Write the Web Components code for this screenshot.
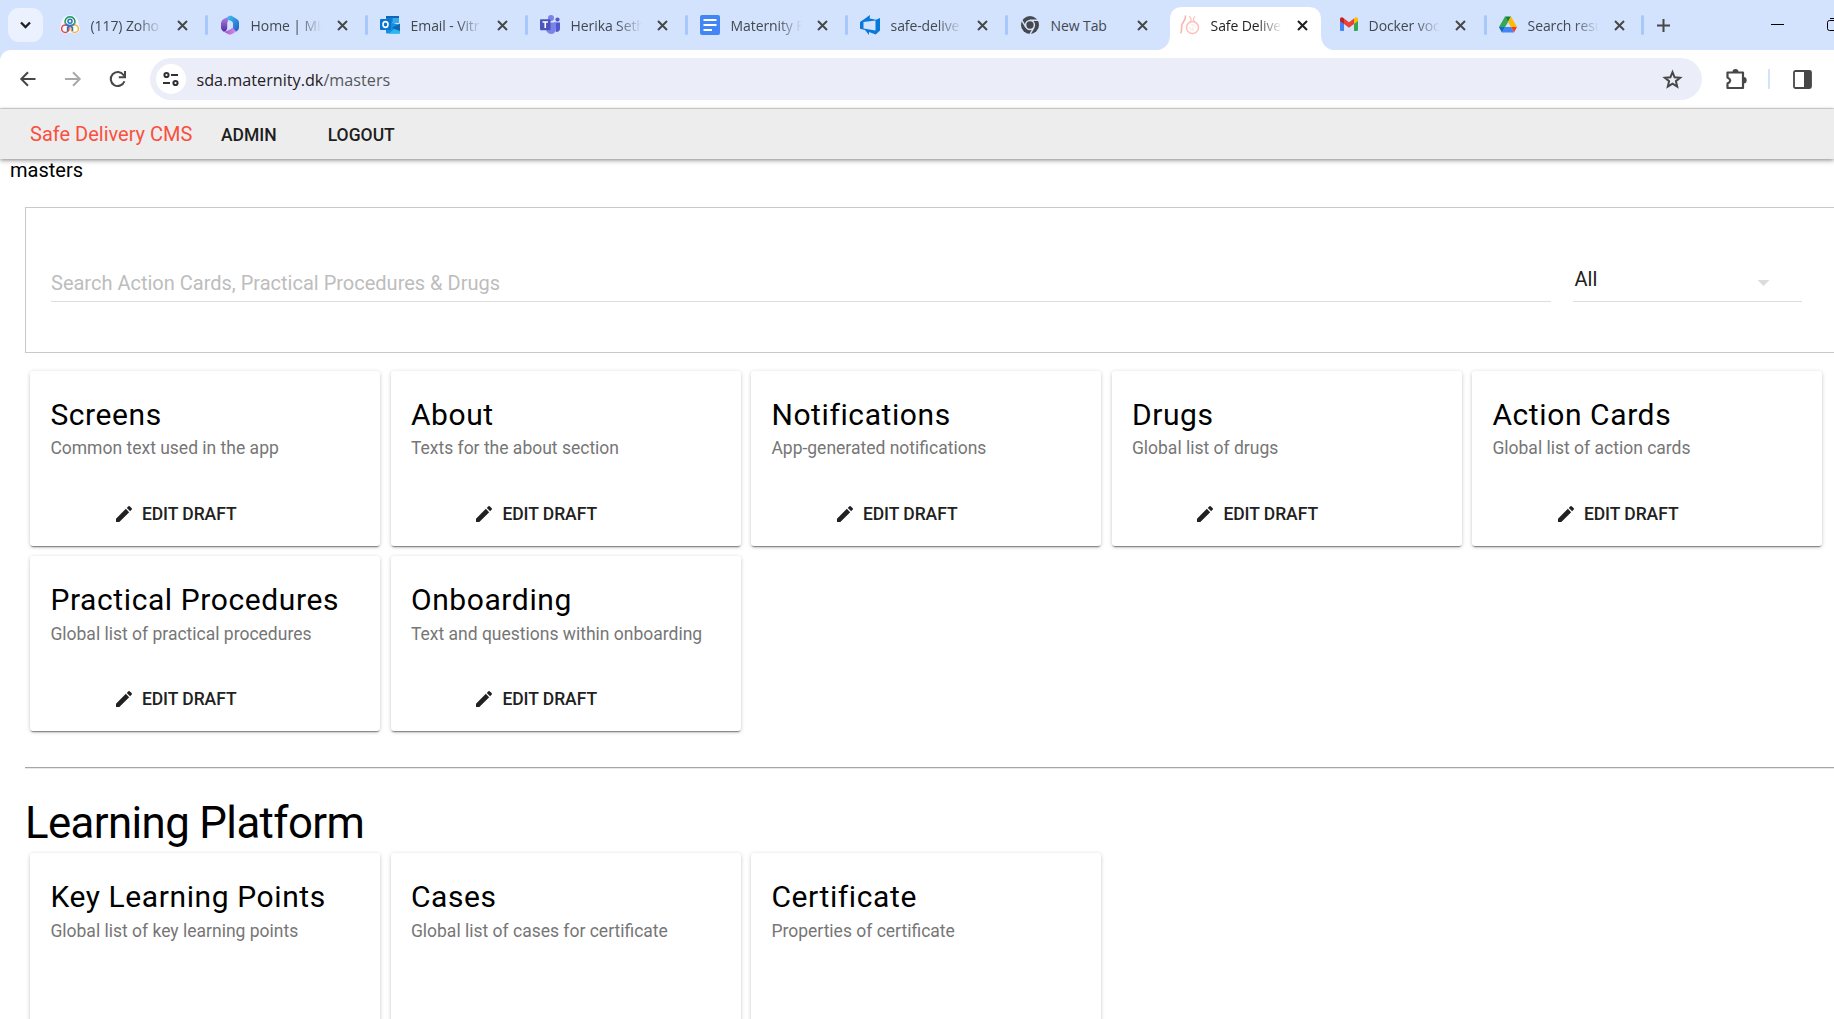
<!DOCTYPE html>
<html lang="en">
<head>
<meta charset="utf-8">
<title>Safe Delivery CMS</title>
<style>
html,body{margin:0;height:100%;overflow:hidden;background:#fff}
body{font-family:Roboto,"Liberation Sans",sans-serif;color:#000}
</style>
</head>
<body>
<cms-window></cms-window>
<script>
const define=(name,css,html)=>customElements.define(name,class extends HTMLElement{
  connectedCallback(){
    if(this.shadowRoot)return;
    const root=this.attachShadow({mode:'open'});
    root.innerHTML='<style>*{box-sizing:border-box}svg{display:block;overflow:visible}'+css+'</style>'+(typeof html==='function'?html(this):html);
  }
});

const icons={
zoho:'<circle cx="10" cy="9" r="9" fill="#f7fafc" opacity=".8"/><circle cx="5.300" cy="13.500" r="5" fill="#fff"/><circle cx="14.700" cy="13.500" r="5" fill="#fff"/><g fill="none" stroke-width="1.500"><path d="M5.300 8.500a5 5 0 1 1 9.400 0" stroke="#159957"/><circle cx="5.300" cy="13.700" r="3.700" stroke="#e3434b"/><circle cx="14.700" cy="13.700" r="3.700" stroke="#f4b63d"/><path d="M5.500 8.400c1 2 3 2 4.500 2s3.500 0 4.500-2M7.500 16v-3.500L10 11l2.500 1.500V16" stroke="#2c75bd"/><circle cx="10" cy="6.300" r="2" stroke="#2c75bd"/></g>',
m365:'<defs><linearGradient id="a" x1="0" y1="0" x2="0" y2="1"><stop stop-color="#b68be9"/><stop offset="1" stop-color="#512aa0"/></linearGradient><linearGradient id="b" x1="0" y1="0" x2="1" y2="1"><stop stop-color="#3fc4f5"/><stop offset="1" stop-color="#2759c5"/></linearGradient><linearGradient id="c"><stop stop-color="#9d55d8"/><stop offset="1" stop-color="#dc90ea"/></linearGradient></defs><path d="M11 .8 4.500 3.600Q1.300 5 1 8v5q.3 2.700 2.800 3.800 3.200-.8 3.400-3.800V8Q7.500 4.500 11 .8z" fill="url(#a)"/><path d="M9 .8h2.500l6 3.600q1.500 1 1.500 3V13q-.3 2.500-2.800 3.500-3-1-3.200-3.500V8Q12.500 6 10 5.500 7.500 5 7 3z" fill="url(#b)"/><path d="M3.500 16.500q3.500-.3 6-1.800l3.500-2.200q.6 3 4 3.800L12 18.900q-2 1-4.200 0z" fill="url(#c)"/>',
outlook:'<path d="M6 1h13v6H6z" fill="#0e66b5"/><path d="M6 3h6.500v5H6z" fill="#137fd2"/><path d="M12.500 3H19v5h-6.500z" fill="#36a9ee"/><path d="M6 8h7l7 2v7.500q0 1-1 1H7q-1 0-1-1z" fill="#1490df"/><path d="M20 9v9q0 .5-1 .5H9z" fill="#28b7ef"/><path d="m12 13 8-4.500V16z" fill="#1265b0"/><rect y="4" width="11" height="11" rx="1" fill="#0875cf"/><ellipse cx="5.500" cy="9.500" rx="2.500" ry="2.900" fill="none" stroke="#fff" stroke-width="1.600"/>',
teams:'<circle cx="11" cy="3" r="3" fill="#7b83eb"/><circle cx="17.500" cy="4.600" r="2.100" fill="#5059c9"/><path d="M14 7.500h6V14q-.4 3-4 3z" fill="#5059c9"/><path d="M6 7.500h10V14q-.5 5-5 5-4.500-.3-5-5z" fill="#7b83eb"/><rect y="4.300" width="10.500" height="11" rx="1" fill="#4b53bc"/><path d="M2.500 7h5.500M5.250 7v6" stroke="#fff" stroke-width="1.600"/>',
docs:'<rect width="20" height="20" rx="2" fill="#4285f4"/><path d="M3.500 5h13M3.500 10h13M3.500 15h8.500" stroke="#fff" stroke-width="2"/>',
devops:'<path fill-rule="evenodd" d="M0 7 5.500 3.300 9.800 0v3.400L16 4.800 20 3v12.500l-4.300 4L9 17v3l-4-5-5-1.200zM3.500 7v6.500l12 2V5.500z" fill="#0879da"/>',
chrome:'<circle cx="10" cy="10" r="9" fill="#46484c"/><circle cx="10" cy="10" r="4.400" fill="#46484c" stroke="#d3e3fd" stroke-width="1.500"/><path d="M9.800 5.300H18M6 12.300 1.800 5.300M13.900 12.300l-4 7.200" stroke="#d3e3fd" stroke-width="1.500"/>',
safe:'<g fill="none" stroke="#f9b5ae" stroke-linecap="round"><circle cx="12.500" cy="12.600" r="6" stroke-width="1.500" opacity=".85"/><path d="M.8 17.700C2.500 15 .8 12.500 2 9.500S6 5 5.500 1" stroke-width="1.600"/><path d="M9.700 1.500q2.500 2.500.8 5M14.800 1.500q-2.300 2.500-.5 5" stroke-width="1.100" opacity=".8"/><path d="M9.500 12q.4 3 3 3.300M11.500 10q3-1.500 4 2M13 12v3" stroke-width=".8" opacity=".5"/></g>',
gmail:'<path d="M0 4v11q0 1 1 1h3V7z" fill="#4285f4"/><path d="M14 7v9h3q1 0 1-1V4z" fill="#34a853"/><path d="M14 3.500V9l4-3V4q-.3-2.400-2.700-1.500z" fill="#fbbc04"/><path d="m4 3.500 5 3.700 5-3.700V9l-5 3.700L4 9z" fill="#ea4335"/><path d="M0 6V4q.3-2.400 2.700-1.500L4 3.500V9z" fill="#c5221f"/>',
drive:'<path d="M6 1.500 0 12l3 5.500L9 7z" fill="#34a853"/><path d="M6 1.500h6L9 7z" fill="#188038"/><path d="m12 1.500 6 10.500h-6L9 7z" fill="#fbbc04"/><path d="M0 12h6l-3 5.500z" fill="#1967d2"/><path d="M6 12h6l3 5.500H3z" fill="#4285f4"/><path d="M12 12h6l-3 5.500z" fill="#ea4335"/>'
};

define('browser-tab',`
:host{display:flex;position:relative;align-items:center;width:160px;height:50px;flex:none;padding-left:12px;font:14px "Open Sans","Noto Sans",sans-serif;letter-spacing:-.1px;color:#43484f}
:host([icon=gmail]){width:159px}:host([icon=drive]){width:157px}
.fav{width:20px;height:20px;flex:none}
.label{width:71px;margin-left:11px;overflow:hidden;white-space:nowrap;line-height:24px;padding-top:1px}
:host([icon=gmail]) .label,:host([icon=drive]) .label{margin-left:9px}
:host([fade]) .label{-webkit-mask-image:linear-gradient(90deg,#000 65%,transparent);mask-image:linear-gradient(90deg,#000 65%,transparent)}
.close{margin-left:15px;width:11px;height:11px}
:host([icon=drive]) .close{margin-left:15px}
.sep{width:3px;height:20px;border-radius:2px;background:#a8c7fa;margin-left:auto}
:host([nosep]) .sep{visibility:hidden}
:host([active]){color:#1f1f1f}
.shape{position:absolute;left:-14px;top:7px;z-index:-1}
`,t=>`${t.hasAttribute('active')?'<svg class="shape" width="182" height="44"><path d="M0 44v-.5Q16 43 16 27V13Q16 0 29 0h125q13 0 13 13v14q0 16 16 16.500v.5z" fill="#fff"/></svg>':''}<svg class="fav" viewBox="0 0 20 20">${icons[t.getAttribute('icon')]}</svg><div class="label"><slot></slot></div><svg class="close" viewBox="0 0 11 11"><path d="m1 1 9 9m0-9-9 9" fill="none" stroke="${t.hasAttribute('active')?'#1f1f1f':'#474747'}" stroke-width="2"/></svg><div class="sep"></div>`);

define('tab-strip',`
:host{display:flex;height:50px;background:#d3e3fd;padding-left:8px;position:relative;z-index:0;overflow:hidden}
.search{width:35px;height:34px;border-radius:11px;background:#ebf1fe;margin:8px 4.600px 0 0;display:grid;place-items:center;flex:none}
.plus{margin:19px 0 0 13px;flex:none}.min{margin:24px 0 0 101px;flex:none}.max{margin:18px 0 0 43px;flex:none}
`,`<div class="search"><svg width="11" height="8"><path d="m1 1.500 4.500 4.500L10 1.500" fill="none" stroke="#1f1f1f" stroke-width="2.300"/></svg></div>
<browser-tab icon="zoho" fade>(117) Zoho</browser-tab><browser-tab icon="m365" fade>Home | Mic</browser-tab><browser-tab icon="outlook" fade>Email - Vitr</browser-tab><browser-tab icon="teams" fade>Herika Seth</browser-tab><browser-tab icon="docs" fade>Maternity F</browser-tab><browser-tab icon="devops" fade>safe-delive</browser-tab><browser-tab icon="chrome" nosep>New Tab</browser-tab><browser-tab icon="safe" active fade nosep>Safe Delive</browser-tab><browser-tab icon="gmail" fade>Docker voc</browser-tab><browser-tab icon="drive" fade>Search resu</browser-tab>
<svg class="plus" width="13" height="13"><path d="M6.500 0v13M0 6.500h13" stroke="#474747" stroke-width="2"/></svg>
<svg class="min" width="13" height="1"><path d="M0 .5h13" stroke="#000"/></svg>
<svg class="max" width="14" height="14"><rect x=".5" y="2.500" width="10" height="10" rx="2" fill="none" stroke="#000"/><path d="M3 .5h10V10" fill="none" stroke="#000"/></svg>`);

define('address-bar',`
:host{display:block;height:59px;background:#d3e3fd}
.bar{display:flex;align-items:center;height:59px;background:#fff;border-radius:11px 0 0 0;border-bottom:1px solid #dcdcdd;padding-left:20px}
svg{flex:none}.fwd{margin-left:29px}.reload{margin-left:29px}
.omni{display:flex;align-items:center;width:1552px;height:42px;border-radius:21px;background:#ebeef8;margin-left:24px;padding:0 20px 0 6px;flex:none}
.site{width:30px;height:30px;border-radius:50%;background:#fff;display:grid;place-items:center;flex:none}
.url{font:16.200px/24px "Open Sans","Noto Sans",sans-serif;color:#1f2023;margin-left:10.500px;padding-top:1px;flex:1;white-space:nowrap}.url span{color:#55585c}
.puzzle{margin-left:24px}.line{width:2px;height:20px;background:#d3e3fd;margin:0 23px 0 21px}
`,`<div class="bar">
<svg width="16" height="16"><path d="M15.500 8H2M8 1.300 1.300 8 8 14.700" fill="none" stroke="#474747" stroke-width="2"/></svg>
<svg class="fwd" width="16" height="16"><path d="M0 8h13.500M8 1.300 14.700 8 8 14.700" fill="none" stroke="#a9a9a9" stroke-width="2"/></svg>
<svg class="reload" width="16" height="16"><path d="M14.400 10.200A7 7 0 1 1 13.500 4L15 5.800" fill="none" stroke="#474747" stroke-width="2"/><path d="M15 0v6.300H8.800" fill="none" stroke="#474747" stroke-width="2"/></svg>
<div class="omni"><div class="site"><svg width="16" height="14"><g fill="none" stroke="#303134" stroke-width="2"><circle cx="3.500" cy="3" r="2.100"/><path d="M8 3h7M0 11h7"/><circle cx="12.500" cy="11" r="2.100"/></g></svg></div>
<div class="url">sda.maternity.dk<span>/masters</span></div>
<svg width="19" height="19"><path d="m9.500 2.200 2.100 5.100 5.500.4-4.200 3.500 1.300 5.300-4.700-2.900-4.700 2.900 1.300-5.300-4.200-3.500 5.500-.4z" fill="none" stroke="#474747" stroke-width="2"/></svg></div>
<svg class="puzzle" width="21" height="21" viewBox="0 0 21 21"><path d="M1.500 3.500h15.500v15.500H1.500V14.500q5.500-3 0-6z" fill="none" stroke="#474747" stroke-width="2.200" stroke-linejoin="round"/><path d="M6.500 3a3 3 0 0 1 6 0zM17.500 8a3.200 3.200 0 0 1 0 6.400z" fill="#474747"/></svg>
<div class="line"></div>
<svg width="19" height="19"><rect x="1" y="1" width="17" height="17" rx="1.500" fill="none" stroke="#474747" stroke-width="1.800"/><path d="M11 1h6q1 0 1 1v15q0 1-1 1h-6z" fill="#474747"/></svg></div>`);

define('cms-header',`
:host{display:flex;align-items:center;height:50px;background:#ededed;box-shadow:0 1px 4px rgba(0,0,0,.42),0 3px 6px rgba(0,0,0,.08);padding-left:30px;position:relative;white-space:nowrap}
.brand{font-size:20px;color:#f9503f;width:191px}
a{font-size:17.500px;font-weight:500;color:#1e1e1e;padding-top:1px}a+a{margin-left:51px}
`,`<div class="brand">Safe Delivery CMS</div><a>ADMIN</a><a>LOGOUT</a>`);

define('search-panel',`
:host{display:flex;align-items:flex-start;height:146px;width:1830px;margin:25px 0 0 25px;border:1px solid #c8c9ca;padding:53px 0 0 25px;font-size:20px;line-height:24px}
.q{width:1500px;height:41px;border-bottom:1px solid #dedede;color:#bdbdbd;padding-top:10px}
.s{width:229px;height:41px;border-bottom:1px solid #dedede;margin-left:22px;padding:6px 32px 0 1.500px;color:#212121;display:flex;justify-content:space-between}
.s svg{margin-top:13px}
`,`<div class="q">Search Action Cards, Practical Procedures &amp; Drugs</div><div class="s"><span>All</span><svg width="13" height="6"><path d="M.5 0h12l-6 6z" fill="#dcdcdc"/></svg></div>`);

define('master-card',`
:host{display:flex;flex-direction:column;width:350px;height:175px;border-radius:3px;background:#fff;box-shadow:0 1px 4px rgba(0,0,0,.2),0 2px 1.500px -1px rgba(0,0,0,.48);padding:24px 20px 0 20.400px;white-space:nowrap}
:host([tall]){height:240px}
.t{font-size:30px;line-height:40px;letter-spacing:.6px}
.d{font-size:17.500px;line-height:24px;color:#767676;margin-top:1px}
:host([low]) .d{margin:2px 0 -1px}
.a{display:flex;align-items:center;margin:42px 0 0 65.500px;height:24px;font-size:17.500px;font-weight:500;letter-spacing:-.05px;color:#212121;gap:10px}
`,t=>`<div class="t"><slot></slot></div><div class="d">${t.getAttribute('text')}</div>${t.hasAttribute('tall')?'':`<div class="a"><svg width="16" height="16" viewBox="3 3 18 18"><path d="M3 17.250V21h3.750L17.810 9.940l-3.750-3.750zM20.710 7.040a1 1 0 0 0 0-1.410l-2.340-2.340a1 1 0 0 0-1.410 0l-1.830 1.830 3.750 3.750z" fill="#212121"/></svg><span>EDIT DRAFT</span></div>`}`);

define('card-grid',`:host{display:grid;grid-template-columns:repeat(5,350px);column-gap:10.500px;row-gap:10px;padding-left:30px}`,`<slot></slot>`);

define('cms-window',`
:host{display:block;width:1834px;height:1019px;overflow:hidden;background:#fff}
.crumb{font-size:20px;line-height:23px;padding-left:10px;height:23px}
.first{margin-top:18px}
.hr{height:2px;background:linear-gradient(#a6a7a7 50%,#e9e9e9 50%);margin:36px 0 0 25px}
h1{font-size:43.750px;font-weight:400;line-height:56px;letter-spacing:-.6px;margin:26px 0 2px 25px}
`,`<tab-strip></tab-strip><address-bar></address-bar><cms-header></cms-header><div class="crumb">masters</div>
<search-panel></search-panel>
<card-grid class="first"><master-card text="Common text used in the app">Screens</master-card><master-card text="Texts for the about section">About</master-card><master-card text="App-generated notifications">Notifications</master-card><master-card text="Global list of drugs">Drugs</master-card><master-card text="Global list of action cards">Action Cards</master-card><master-card low text="Global list of practical procedures">Practical Procedures</master-card><master-card low text="Text and questions within onboarding">Onboarding</master-card></card-grid>
<div class="hr"></div><h1>Learning Platform</h1>
<card-grid><master-card tall low text="Global list of key learning points">Key Learning Points</master-card><master-card tall low text="Global list of cases for certificate">Cases</master-card><master-card tall low text="Properties of certificate">Certificate</master-card></card-grid>`);
</script>
</body>
</html>
